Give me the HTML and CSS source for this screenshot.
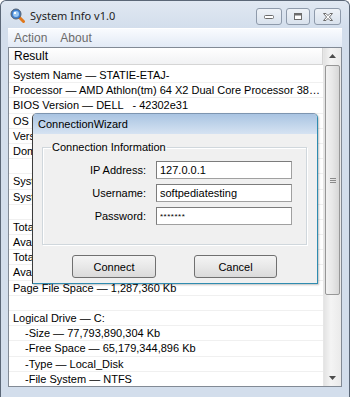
FILE: index.html
```html
<!DOCTYPE html>
<html lang="en">
<head>
  <meta charset="UTF-8" />
  <title>System Info v1.0</title>
  <link rel="stylesheet" href="styles.css">
</head>
<body>

  <div class="window">
    <div class="titlebar">
      <svg class="app-icon" width="15" height="15" viewBox="0 0 15 15">
        <line x1="8.5" y1="8.5" x2="13.5" y2="13.5" stroke="#e0781c" stroke-width="3" stroke-linecap="round" />
        <circle cx="6" cy="6" r="5" fill="#3f7fd0" stroke="#55606e" stroke-width="1" />
        <circle cx="6" cy="6" r="3" fill="#9cc8f2" />
        <rect x="4" y="4" width="2" height="2" fill="#ffffff" />
      </svg>
      <span class="title">System Info v1.0</span>
      <div class="caption-buttons">
        <span class="cap-btn min">
          <svg width="12" height="7" viewBox="0 0 12 7"><rect x="1.5" y="2.5" width="9" height="3" rx="1" fill="#fff" stroke="#6c6c6c" /></svg>
        </span>
        <span class="cap-btn max">
          <svg width="10" height="9" viewBox="0 0 10 9"><rect x="1.5" y="1.5" width="7" height="6" fill="#fff" stroke="#6c6c6c" /><rect x="2" y="2" width="6" height="1.5" fill="#6c6c6c" /></svg>
        </span>
        <span class="cap-btn close">
          <svg width="12" height="10" viewBox="0 0 12 10"><path d="M1.5 1.5 H4 L6 3.6 L8 1.5 H10.5 L7.4 5 L10.5 8.5 H8 L6 6.4 L4 8.5 H1.5 L4.6 5 Z" fill="#fff" stroke="#6c6c6c" stroke-linejoin="round" /></svg>
        </span>
      </div>
    </div>

    <div class="menubar">
      <span>Action</span>
      <span>About</span>
    </div>

    <div class="client">
      <div class="list">
        <div class="list-header"><span>Result</span></div>
        <div class="rows">
          <div class="row">System Name — STATIE-ETAJ-</div>
          <div class="row">Processor — AMD Athlon(tm) 64 X2 Dual Core Processor 3800+</div>
          <div class="row">BIOS Version — DELL   - 42302e31</div>
          <div class="row">OS Name — Microsoft Windows 7</div>
          <div class="row">Version — 6.1.7600</div>
          <div class="row">Domain — WORKGROUP</div>
          <div class="row"></div>
          <div class="row">System Directory — C:\Windows\system32</div>
          <div class="row">System Drive — C:</div>
          <div class="row"></div>
          <div class="row">Total Physical Memory — 2,096,568 Kb</div>
          <div class="row">Available Physical Memory — 1,012,400 Kb</div>
          <div class="row">Total Virtual Memory — 4,191,280 Kb</div>
          <div class="row">Available Virtual Memory — 2,850,116 Kb</div>
          <div class="row">Page File Space — 1,287,360 Kb</div>
          <div class="row"></div>
          <div class="row">Logical Drive — C:</div>
          <div class="row sub">-Size — 77,793,890,304 Kb</div>
          <div class="row sub">-Free Space — 65,179,344,896 Kb</div>
          <div class="row sub">-Type — Local_Disk</div>
          <div class="row sub">-File System — NTFS</div>
        </div>
      </div>
      <div class="scrollbar">
        <div class="sb-arrow">
          <svg width="7" height="4" viewBox="0 0 7 4"><path d="M0 4 L3.5 0 L7 4 Z" fill="#4d4d4d" /></svg>
        </div>
        <div class="sb-thumb">
          <span class="grip"></span>
        </div>
        <div class="sb-track"></div>
        <div class="sb-arrow">
          <svg width="7" height="4" viewBox="0 0 7 4"><path d="M0 0 L7 0 L3.5 4 Z" fill="#4d4d4d" /></svg>
        </div>
      </div>
    </div>

    <div class="dialog">
      <div class="dialog-title">ConnectionWizard</div>
      <div class="dialog-body">
        <fieldset class="group">
          <legend>Connection Information</legend>
          <div class="form">
            <label>IP Address:</label>
            <input type="text" value="127.0.0.1" />
            <label>Username:</label>
            <input type="text" value="softpediatesting" />
            <label>Password:</label>
            <input type="text" class="pass" value="*******" />
          </div>
        </fieldset>
        <div class="actions">
          <button>Connect</button>
          <button>Cancel</button>
        </div>
      </div>
    </div>
  </div>

</body>
</html>
```

FILE: styles.css
```css
body {
  margin: 0;
  background: #ffffff;
  font-family: "Liberation Sans", Arial, sans-serif;
}

.window {
  position: relative;
  width: 350px;
  height: 397px;
  box-sizing: border-box;
  border: 1px solid #5b6777;
  border-bottom: none;
  border-radius: 6px 6px 0 0;
  background: #d3deec;
  padding: 0 7px 10px 7px;
  display: flex;
  flex-direction: column;
}

/* title bar */
.titlebar {
  height: 27px;
  display: flex;
  align-items: center;
  padding-left: 2px;
  margin: 0 -7px;
  padding: 0 8px 0 9px;
  background: linear-gradient(#e0e8f2, #d3deec);
  border-radius: 6px 6px 0 0;
}

.app-icon {
  margin-top: 2px;
}

.title {
  font-family: "Noto Sans", sans-serif;
  font-size: 11px;
  color: #1e1e1e;
  margin-left: 5px;
  margin-top: 2px;
}

.caption-buttons {
  margin-left: auto;
  display: flex;
  gap: 4px;
  margin-top: 4px;
}

.cap-btn {
  height: 15px;
  border: 1px solid #8e9aab;
  border-radius: 3px;
  background: linear-gradient(#eef2f7, #d9e2ed);
  display: flex;
  align-items: center;
  justify-content: center;
}

.cap-btn.min { width: 24px; }
.cap-btn.max { width: 22px; }
.cap-btn.close { width: 25px; }

/* menu */
.menubar {
  height: 18px;
  display: flex;
  align-items: center;
  gap: 13px;
  padding-left: 6px;
  background: linear-gradient(#f9fbfe, #e2eaf5);
  border-top: 1px solid #ffffff;
  font-size: 12px;
  color: #6b6b6b;
}

/* list */
.client {
  flex: 1;
  display: flex;
  margin-top: 0;
  border: 1px solid #828a95;
  background: #ffffff;
  overflow: hidden;
}

.list {
  flex: 1;
  min-width: 0;
}

.list-header {
  height: 16px;
  border-bottom: 1px solid #d5d5d5;
  border-right: 1px solid #d5d5d5;
  background: linear-gradient(#ffffff, #f1f2f4);
  font-size: 12px;
  line-height: 16px;
  padding-left: 5px;
  color: #000;
}

.rows {
  padding-top: 3px;
}

.row {
  height: 15.2px;
  box-sizing: border-box;
  border-bottom: 1px solid #f0f0f0;
  font-size: 11px;
  line-height: 15px;
  padding-left: 4px;
  white-space: pre;
  overflow: hidden;
  text-overflow: ellipsis;
  color: #000;
}

.row.sub {
  padding-left: 16px;
}

/* scrollbar */
.scrollbar {
  width: 17px;
  display: flex;
  flex-direction: column;
  background: linear-gradient(90deg, #e3e3e3, #f4f4f4 40%, #eaeaea);
  border-left: 1px solid #e6e6e6;
}

.sb-arrow {
  height: 16px;
  display: flex;
  align-items: center;
  justify-content: center;
}

.sb-thumb {
  height: 228px;
  margin: 1px 1px 0 1px;
  border: 1px solid #979797;
  border-radius: 2px;
  background: linear-gradient(90deg, #f2f2f2, #e7e7e7 50%, #d7d7d7);
  display: flex;
  align-items: center;
  justify-content: center;
}

.grip {
  width: 6px;
  height: 5px;
  border-top: 1px solid #8a8a8a;
  border-bottom: 1px solid #8a8a8a;
  box-sizing: border-box;
  position: relative;
}

.grip::after {
  content: "";
  position: absolute;
  left: 0;
  right: 0;
  top: 1px;
  border-top: 1px solid #8a8a8a;
}

.sb-track {
  flex: 1;
}

/* dialog */
.dialog {
  position: absolute;
  left: 31px;
  top: 112px;
  width: 286px;
  height: 171px;
  box-sizing: border-box;
  border: 1px solid #2f8cb0;
  border-left-color: #3c3c3c;
  border-top-color: #7d95b0;
  border-radius: 5px 5px 0 0;
  background: #f0f0f0;
  display: flex;
  flex-direction: column;
  box-shadow: 1px 1px 2px rgba(0, 0, 0, 0.25);
}

.dialog-title {
  height: 20px;
  line-height: 20px;
  padding-left: 5px;
  font-size: 11px;
  color: #000;
  background: linear-gradient(#a9c4e2, #d6e3f2);
  border-radius: 4px 4px 0 0;
}

.dialog-body {
  flex: 1;
  padding: 7px 10px 0 9px;
}

.group {
  margin: 0;
  padding: 8px 0 0 0;
  height: 104px;
  box-sizing: border-box;
  border: 1px solid #d0d7dc;
  box-shadow: inset 1px 1px 0 #ffffff, 1px 1px 0 #ffffff;
}

.group legend {
  font-size: 11px;
  padding: 0 1px;
  margin-left: 8px;
  color: #000;
}

.form {
  display: grid;
  grid-template-columns: 103px 136px;
  column-gap: 10px;
  row-gap: 5px;
  align-items: center;
}

.form label {
  font-size: 11px;
  text-align: right;
  color: #000;
}

.form input {
  height: 18px;
  box-sizing: border-box;
  border: 1px solid #a0a0a0;
  border-top-color: #7c7c7c;
  border-left-color: #7c7c7c;
  background: #ffffff;
  font-family: "Liberation Sans", Arial, sans-serif;
  font-size: 11px;
  padding: 0 3px;
  margin: 0;
  color: #000;
}

.form input.pass {
  font-size: 8px;
  letter-spacing: 0.5px;
}

.actions {
  display: flex;
  gap: 38px;
  margin-top: 10px;
  padding-left: 30px;
}

.actions button {
  width: 84px;
  height: 23px;
  border: 1px solid #707070;
  border-radius: 3px;
  background: linear-gradient(#f4f4f4, #e8e8e8 50%, #dadada);
  font-family: "Liberation Sans", Arial, sans-serif;
  font-size: 11px;
  color: #000;
  padding: 0;
}

.actions button + button {
  width: 83px;
}
```
